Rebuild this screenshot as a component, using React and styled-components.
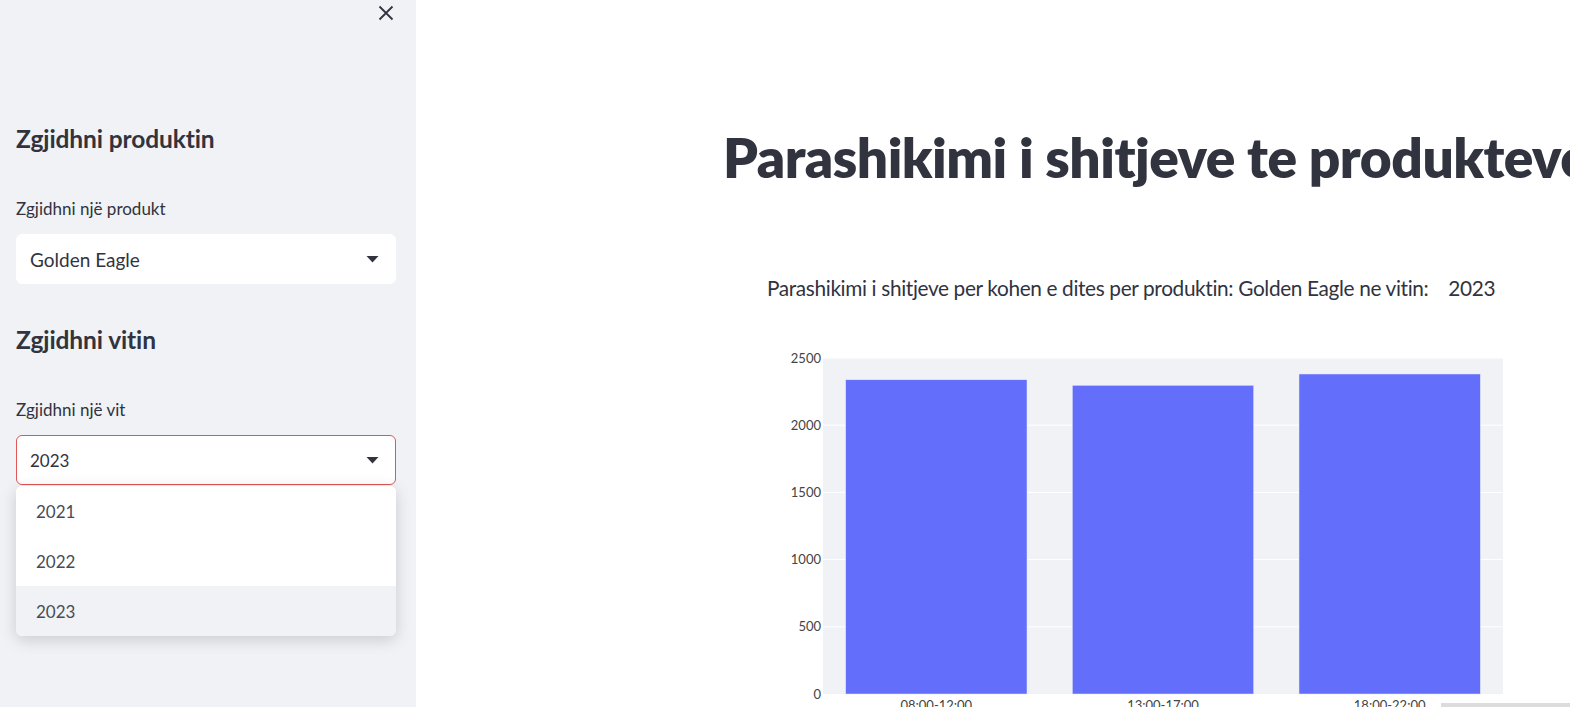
import React from "react";
import styled, { createGlobalStyle } from "styled-components";

const GlobalStyle = createGlobalStyle`
  html, body { margin: 0; padding: 0; }
  body {
    font-family: Lato, "Noto Sans", sans-serif;
    color: #31333f;
    background: #ffffff;
    overflow: hidden;
  }
  * { box-sizing: border-box; }
`;

const Page = styled.div`
  display: flex;
  width: 1570px;
  height: 707px;
  overflow: hidden;
  position: relative;
`;

const Sidebar = styled.aside`
  width: 416px;
  flex: 0 0 416px;
  background: #f0f2f6;
  padding: 0 20px 0 16px;
  display: flex;
  flex-direction: column;
`;

const SidebarTop = styled.div`
  display: flex;
  justify-content: flex-end;
  height: 110px;
  padding-top: 5px;
`;

const CloseButton = styled.button`
  border: 0;
  background: transparent;
  padding: 0;
  width: 16px;
  height: 16px;
  margin-right: 2px;
  display: flex;
  color: #31333f;
  cursor: pointer;
`;

const SectionTitle = styled.h2`
  margin: 0;
  font-size: 24.5px;
  font-weight: 700;
  line-height: 58px;
  height: 58px;
  letter-spacing: -0.1px;
`;

const FieldLabel = styled.div`
  font-size: 17px;
  line-height: 20px;
  margin-top: ${(p) => p.$gap}px;
  margin-bottom: 15px;
`;

const SelectWrap = styled.div`
  position: relative;
  margin-bottom: ${(p) => p.$after}px;
`;

const SelectBox = styled.div`
  height: 50px;
  background: #ffffff;
  border-radius: 6px;
  border: 1px solid ${(p) => (p.$open ? "#e05555" : "#ffffff")};
  display: flex;
  align-items: center;
  justify-content: space-between;
  padding: 0 16px 0 13px;
  font-size: ${(p) => (p.$numeric ? 17 : 19)}px;
`;

const Caret = styled.svg`
  width: 13px;
  height: 8px;
  display: block;
`;

const Menu = styled.ul`
  position: absolute;
  left: 0;
  right: 0;
  top: 51px;
  margin: 0;
  padding: 0;
  list-style: none;
  background: #ffffff;
  border-radius: 6px;
  overflow: hidden;
  box-shadow: 0 4px 16px rgba(0, 0, 0, 0.16);
  z-index: 5;
`;

const MenuItem = styled.li`
  height: 50px;
  display: flex;
  align-items: center;
  padding-left: 20px;
  font-size: 17px;
  color: #4a4b55;
  background: ${(p) => (p.$active ? "#f0f2f6" : "#ffffff")};
`;

const Main = styled.main`
  flex: 1;
  min-width: 0;
  overflow: hidden;
  display: flex;
  flex-direction: column;
  padding-top: 122px;
`;

const Title = styled.h1`
  margin: 0 0 0 307px;
  font-size: 55px;
  line-height: 70px;
  font-weight: 800;
  white-space: nowrap;
  letter-spacing: -0.5px;
`;

const ChartBlock = styled.section`
  margin: 82px 0 0 344px;
  display: flex;
  flex-direction: column;
`;

const ChartTitle = styled.div`
  font-size: 20.8px;
  line-height: 28px;
  white-space: pre;
  color: #31333f;
  padding-left: 7px;
  letter-spacing: -0.35px;
`;

const ChartSvg = styled.svg`
  display: block;
  margin-top: 43px;
  overflow: visible;
`;

const Scrollbar = styled.div`
  position: absolute;
  left: 1441px;
  right: 0;
  bottom: 0;
  height: 4px;
  background: #dcdcdc;
`;

const data = [
  { label: "08:00-12:00", value: 2338 },
  { label: "13:00-17:00", value: 2297 },
  { label: "18:00-22:00", value: 2381 },
];

function BarChart() {
  const left = 63;
  const right = 743;
  const top = 13;
  const bottom = 349;
  const max = 2500;
  const h = bottom - top;
  const y = (v) => bottom - (v / max) * h;
  const band = (right - left) / data.length;
  const bw = band * 0.8;
  const ticks = [0, 500, 1000, 1500, 2000, 2500];
  return (
    <ChartSvg width="810" height="370" viewBox="0 0 810 370">
      <rect x={left} y={top} width={right - left} height={h} fill="#f0f2f6" />
      {ticks.map((t) => (
        <g key={t}>
          {t > 0 && (
            <line x1={left} x2={right} y1={y(t)} y2={y(t)} stroke="#ffffff" strokeWidth="1" />
          )}
          <text
            x={left - 2}
            y={y(t) + 4.5}
            textAnchor="end"
            fontSize="13"
            fill="#444"
            fontFamily="Lato, 'Noto Sans', sans-serif"
          >
            {t}
          </text>
        </g>
      ))}
      {data.map((d, i) => {
        const cx = left + band * i + band / 2;
        return (
          <g key={d.label}>
            <rect
              x={cx - bw / 2}
              y={y(d.value)}
              width={bw}
              height={bottom - y(d.value)}
              fill="#636efa"
              stroke="#e5ecf6"
              strokeWidth="0.5"
            />
            <text
              x={cx}
              y={bottom + 16}
              textAnchor="middle"
              fontSize="13"
              fill="#444"
              fontFamily="Lato, 'Noto Sans', sans-serif"
            >
              {d.label}
            </text>
          </g>
        );
      })}
    </ChartSvg>
  );
}

export default function App() {
  return (
    <>
      <GlobalStyle />
      <Page>
        <Sidebar>
          <SidebarTop>
            <CloseButton aria-label="Close sidebar">
              <svg width="16" height="16" viewBox="0 0 16 16">
                <path d="M1.5 1.5 L14.5 14.5 M14.5 1.5 L1.5 14.5" stroke="#31333f" strokeWidth="1.8" fill="none" />
              </svg>
            </CloseButton>
          </SidebarTop>
          <SectionTitle>Zgjidhni produktin</SectionTitle>
          <FieldLabel $gap={31}>Zgjidhni një produkt</FieldLabel>
          <SelectWrap $after={27}>
            <SelectBox>
              <span>Golden Eagle</span>
              <Caret viewBox="0 0 13 8">
                <path d="M0.5 1 L12.5 1 L6.5 7.5 Z" fill="#31333f" />
              </Caret>
            </SelectBox>
          </SelectWrap>
          <SectionTitle>Zgjidhni vitin</SectionTitle>
          <FieldLabel $gap={31}>Zgjidhni një vit</FieldLabel>
          <SelectWrap $after={0}>
            <SelectBox $open $numeric>
              <span>2023</span>
              <Caret viewBox="0 0 13 8">
                <path d="M0.5 1 L12.5 1 L6.5 7.5 Z" fill="#31333f" />
              </Caret>
            </SelectBox>
            <Menu>
              <MenuItem>2021</MenuItem>
              <MenuItem>2022</MenuItem>
              <MenuItem $active>2023</MenuItem>
            </Menu>
          </SelectWrap>
        </Sidebar>
        <Main>
          <Title>Parashikimi i shitjeve te produkteve</Title>
          <ChartBlock>
            <ChartTitle>Parashikimi i shitjeve per kohen e dites per produktin: Golden Eagle ne vitin:    2023</ChartTitle>
            <BarChart />
          </ChartBlock>
        </Main>
        <Scrollbar />
      </Page>
    </>
  );
}
